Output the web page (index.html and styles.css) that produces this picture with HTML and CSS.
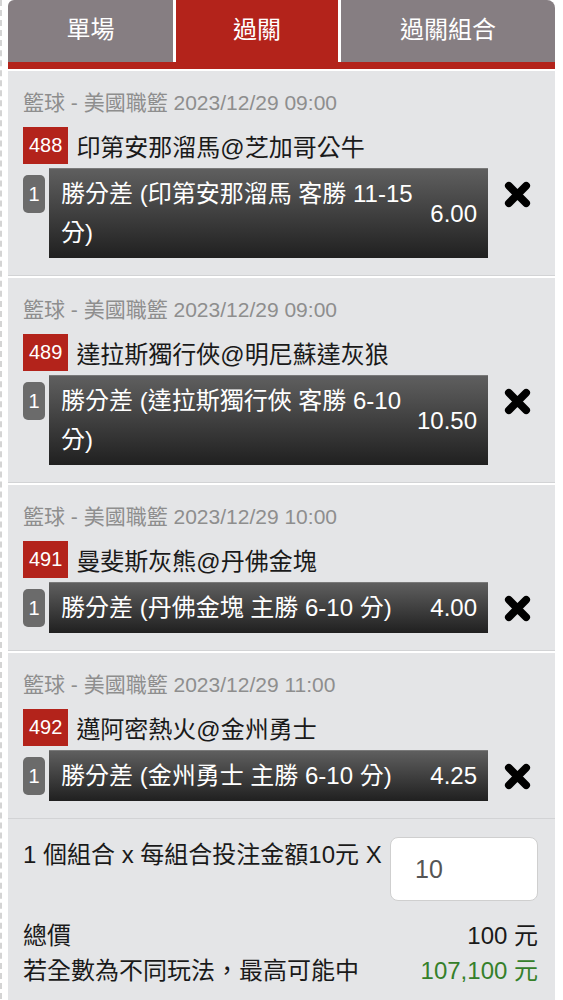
FILE: index.html
```html
<!DOCTYPE html>
<html lang="zh-Hant">
<head>
    <meta charset="UTF-8">
    <meta name="viewport" content="width=device-width, initial-scale=1.0">
    <title>過關</title>
    <link rel="stylesheet" href="styles.css">
</head>
<body>
    <div class="container">
        <!-- Tabs -->
        <div class="tabs">
            <a class="tab tab-first">單場</a>
            <a class="tab active">過關</a>
            <a class="tab tab-last">過關組合</a>
        </div>
        <div class="tab-bar"></div>

        <!-- Selected bets -->
        <div class="bet-list">
            <div class="bet-card">
                <div class="match-info">籃球 - 美國職籃 2023/12/29 09:00</div>
                <div class="match-row">
                    <span class="match-no">488</span>
                    <span class="match-name">印第安那溜馬@芝加哥公牛</span>
                </div>
                <div class="bet-row">
                    <span class="bet-index">1</span>
                    <div class="bet-box">
                        <span class="bet-text">勝分差 (印第安那溜馬 客勝 11-15 分)</span>
                        <span class="bet-odds">6.00</span>
                    </div>
                    <a class="bet-remove"><svg viewBox="0 0 28 28" width="27" height="27"><path d="M5 5 L23 23 M23 5 L5 23" /></svg></a>
                </div>
            </div>

            <div class="bet-card">
                <div class="match-info">籃球 - 美國職籃 2023/12/29 09:00</div>
                <div class="match-row">
                    <span class="match-no">489</span>
                    <span class="match-name">達拉斯獨行俠@明尼蘇達灰狼</span>
                </div>
                <div class="bet-row">
                    <span class="bet-index">1</span>
                    <div class="bet-box">
                        <span class="bet-text">勝分差 (達拉斯獨行俠 客勝 6-10 分)</span>
                        <span class="bet-odds">10.50</span>
                    </div>
                    <a class="bet-remove"><svg viewBox="0 0 28 28" width="27" height="27"><path d="M5 5 L23 23 M23 5 L5 23" /></svg></a>
                </div>
            </div>

            <div class="bet-card">
                <div class="match-info">籃球 - 美國職籃 2023/12/29 10:00</div>
                <div class="match-row">
                    <span class="match-no">491</span>
                    <span class="match-name">曼斐斯灰熊@丹佛金塊</span>
                </div>
                <div class="bet-row">
                    <span class="bet-index">1</span>
                    <div class="bet-box">
                        <span class="bet-text">勝分差 (丹佛金塊 主勝 6-10 分)</span>
                        <span class="bet-odds">4.00</span>
                    </div>
                    <a class="bet-remove"><svg viewBox="0 0 28 28" width="27" height="27"><path d="M5 5 L23 23 M23 5 L5 23" /></svg></a>
                </div>
            </div>

            <div class="bet-card">
                <div class="match-info">籃球 - 美國職籃 2023/12/29 11:00</div>
                <div class="match-row">
                    <span class="match-no">492</span>
                    <span class="match-name">邁阿密熱火@金州勇士</span>
                </div>
                <div class="bet-row">
                    <span class="bet-index">1</span>
                    <div class="bet-box">
                        <span class="bet-text">勝分差 (金州勇士 主勝 6-10 分)</span>
                        <span class="bet-odds">4.25</span>
                    </div>
                    <a class="bet-remove"><svg viewBox="0 0 28 28" width="27" height="27"><path d="M5 5 L23 23 M23 5 L5 23" /></svg></a>
                </div>
            </div>
        </div>

        <!-- Summary -->
        <div class="summary">
            <div class="stake-row">
                <span class="stake-text">1 個組合 x 每組合投注金額10元 X</span>
                <input type="text" class="stake-input" value="10">
            </div>
            <div class="total-row">
                <span>總價</span>
                <span>100 元</span>
            </div>
            <div class="total-row">
                <span>若全數為不同玩法，最高可能中</span>
                <span class="win-amount">107,100 元</span>
            </div>
        </div>
    </div>
</body>
</html>
```

FILE: styles.css
```css
/* General Reset and Layout */
* {
    margin: 0;
    padding: 0;
    box-sizing: border-box;
}

body {
    font-family: 'Liberation Sans', 'Noto Sans CJK TC', sans-serif;
    background-color: #ffffff;
    color: #1a1a1a;
    padding-left: 6px;
    border-left: 2px dashed #d4d4d4;
    min-height: 100vh;
}

.container {
    width: 547px;
}

/* Tabs */
.tabs {
    display: flex;
    gap: 3px;
    height: 62px;
}

.tab {
    display: flex;
    justify-content: center;
    align-items: center;
    padding-bottom: 7px;
    background-color: #867e82;
    color: #ffffff;
    font-size: 24px;
    text-decoration: none;
}

.tab-first {
    width: 165px;
    border-top-left-radius: 6px;
}

.tab.active {
    width: 162px;
    background-color: #b3231b;
}

.tab-last {
    flex: 1;
    border-top-right-radius: 8px;
}

.tab-bar {
    height: 7px;
    background-color: #b3231b;
    margin-bottom: 2px;
}

/* Bet cards */
.bet-list {
    display: flex;
    flex-direction: column;
    gap: 2px;
}

.bet-card {
    background-color: #e4e5e7;
    padding: 17px 7px 17px 15px;
    border-bottom: 1px solid #d2d3d5;
}

.match-info {
    font-size: 21px;
    line-height: 30px;
    color: #8e8e8e;
    margin-bottom: 9px;
}

.match-row {
    display: flex;
    align-items: center;
    gap: 8px;
    margin-bottom: 4px;
}

.match-no {
    background-color: #b3231b;
    color: #ffffff;
    font-size: 20px;
    line-height: 37px;
    padding: 0 6px;
}

.match-name {
    font-size: 24px;
    color: #1a1a1a;
}

.bet-row {
    display: flex;
    align-items: flex-start;
}

.bet-index {
    width: 22px;
    height: 38px;
    margin-top: 7px;
    margin-right: 4px;
    background-color: #6b6b6b;
    border-radius: 5px;
    color: #ffffff;
    font-size: 20px;
    line-height: 38px;
    text-align: center;
}

.bet-box {
    width: 439px;
    display: flex;
    align-items: center;
    gap: 8px;
    padding: 5px 11px 6px 12px;
    background: linear-gradient(#5f5f5f, #202020);
    border-top: 1px solid #7a7a7a;
    color: #ffffff;
    font-size: 24px;
    line-height: 39px;
}

.bet-text {
    flex: 1;
}

.bet-odds {
    white-space: nowrap;
}

.bet-remove {
    flex: 1;
    display: flex;
    justify-content: center;
    padding-top: 13px;
    padding-right: 2px;
}

.bet-remove path {
    stroke: #000000;
    stroke-width: 8;
    stroke-linecap: round;
    fill: none;
}

/* Summary */
.summary {
    background-color: #e4e5e7;
    padding: 18px 17px 20px 15px;
    min-height: 190px;
}

.stake-row {
    display: flex;
    align-items: flex-start;
    gap: 5px;
    margin-bottom: 17px;
}

.stake-text {
    font-size: 24px;
    line-height: 36px;
    white-space: nowrap;
}

.stake-input {
    width: 148px;
    height: 64px;
    border: 1px solid #cfcfcf;
    border-radius: 8px;
    background-color: #ffffff;
    padding-left: 24px;
    font-family: 'Liberation Sans', sans-serif;
    font-size: 25px;
    color: #555555;
    margin-left: auto;
}

.total-row {
    display: flex;
    justify-content: space-between;
    font-size: 24px;
    line-height: 35px;
}

.win-amount {
    color: #35802a;
}
```
